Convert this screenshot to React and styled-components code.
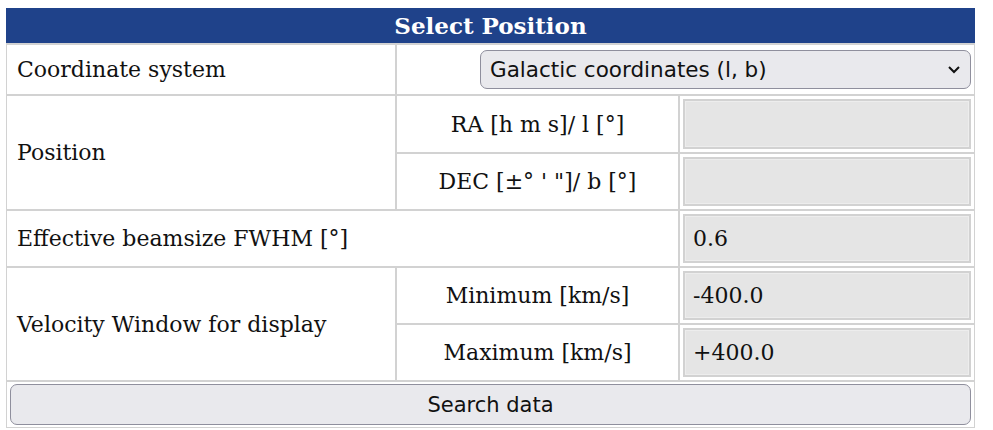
import React from 'react'
import styled, { createGlobalStyle } from 'styled-components'

const GlobalStyle = createGlobalStyle`
  body {
    margin: 0;
    background: #fff;
    font-family: "DejaVu Serif", Georgia, serif;
  }
`

const Page = styled.div`
  padding: 9px 16px 0 6px;
`

const Form = styled.form`
  display: grid;
  grid-template-columns: 388px 281px 1fr;
  grid-template-rows: 33px 49px 56px 55px 55px 55px 55px auto;
  gap: 2px;
  width: 967px;
  background: #d2d2d2;
  border: 1px solid #d2d2d2;
  border-top: 1px solid #fff;
`

const Header = styled.div`
  grid-column: 1 / 4;
  background: #1f428a;
  color: #fff;
  font-weight: bold;
  font-size: 23px;
  display: flex;
  align-items: center;
  justify-content: center;
  margin: -2px -1px 0;
`

const Cell = styled.div`
  background: #fff;
  display: flex;
  align-items: center;
  justify-content: ${p => (p.$center ? 'center' : p.$end ? 'flex-end' : 'flex-start')};
  padding: ${p => (p.$field ? '3px' : '0 10px')};
  font-size: 22px;
  color: #111;
  white-space: nowrap;
  grid-column: ${p => p.$col || 'auto'};
  grid-row: ${p => p.$row || 'auto'};
`

const SelectWrap = styled.div`
  position: relative;
  width: 491px;
  height: 39px;
`

const Select = styled.select`
  appearance: none;
  width: 100%;
  height: 100%;
  border: 1.5px solid #8f8f9d;
  border-radius: 7px;
  background: #e9e9ed;
  font-family: "DejaVu Sans", Tahoma, sans-serif;
  font-size: 21.5px;
  color: #111;
  padding: 0 9px;
`

const Chevron = styled.svg`
  position: absolute;
  right: 10px;
  top: 15px;
  pointer-events: none;
`

const Input = styled.input`
  width: 100%;
  height: 100%;
  box-sizing: border-box;
  border: 2px solid #d2d2d2;
  box-shadow: inset 0 0 0 1px #ededed;
  background: #e5e5e5;
  font-family: "DejaVu Serif", Georgia, serif;
  font-size: 22px;
  color: #111;
  padding: 0 8px;
`

const ButtonCell = styled.div`
  grid-column: 1 / 4;
  background: #fff;
  padding: 2px 3px 2px 3px;
`

const Button = styled.button`
  width: 100%;
  height: 41px;
  border: 1.5px solid #8f8f9d;
  border-radius: 7px;
  background: #e9e9ed;
  font-family: "DejaVu Sans", Tahoma, sans-serif;
  font-size: 21px;
  color: #111;
`

export default function App() {
  return (
    <Page>
      <GlobalStyle />
      <Form onSubmit={e => e.preventDefault()}>
        <Header>Select Position</Header>

        <Cell>Coordinate system</Cell>
        <Cell $col="2 / 4" $end $field>
          <SelectWrap>
            <Select defaultValue="gal">
              <option value="eq">Equatorial coordinates (RA, DEC)</option>
              <option value="gal">Galactic coordinates (l, b)</option>
            </Select>
            <Chevron width="14" height="9" viewBox="0 0 14 9">
              <path d="M2 2 L7 7 L12 2" fill="none" stroke="#111" strokeWidth="2" />
            </Chevron>
          </SelectWrap>
        </Cell>

        <Cell $row="3 / 5">Position</Cell>
        <Cell $center>RA [h m s]/ l [°]</Cell>
        <Cell $field><Input /></Cell>
        <Cell $center>DEC [±° ' "]/ b [°]</Cell>
        <Cell $field><Input /></Cell>

        <Cell $col="1 / 3">Effective beamsize FWHM [°]</Cell>
        <Cell $field><Input defaultValue="0.6" /></Cell>

        <Cell $row="6 / 8">Velocity Window for display</Cell>
        <Cell $center>Minimum [km/s]</Cell>
        <Cell $field><Input defaultValue="-400.0" /></Cell>
        <Cell $center>Maximum [km/s]</Cell>
        <Cell $field><Input defaultValue="+400.0" /></Cell>

        <ButtonCell>
          <Button type="submit">Search data</Button>
        </ButtonCell>
      </Form>
    </Page>
  )
}
